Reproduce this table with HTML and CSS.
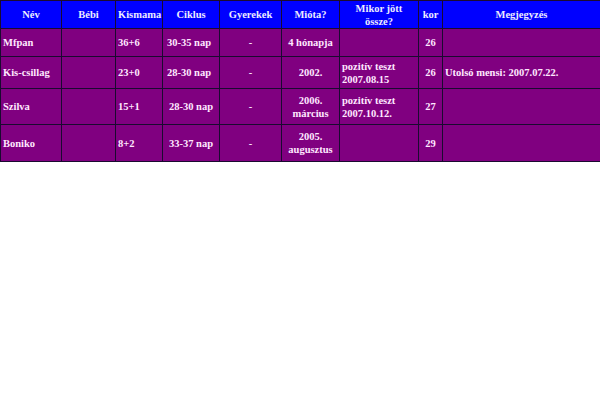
FILE: index.html
```html
<!DOCTYPE html>
<html>
<head>
<meta charset="utf-8">
<link rel="stylesheet" href="styles.css">
</head>
<body>
<table class="grid">
<colgroup>
<col class="c1"><col class="c2"><col class="c3"><col class="c4"><col class="c5"><col class="c6"><col class="c7"><col class="c8"><col class="c9">
</colgroup>
<thead>
<tr class="head">
<th>Név</th><th>Bébi</th><th>Kismama</th><th>Ciklus</th><th>Gyerekek</th><th>Mióta?</th><th>Mikor jött<br>össze?</th><th>kor</th><th>Megjegyzés</th>
</tr>
</thead>
<tbody>
<tr class="r1">
<td>Mfpan</td><td></td><td>36+6</td><td class="cyc">30-35 nap</td><td class="mid">-</td><td class="mid">4 hónapja</td><td></td><td class="mid">26</td><td></td>
</tr>
<tr class="r2">
<td>Kis-csillag</td><td></td><td>23+0</td><td class="cyc">28-30 nap</td><td class="mid">-</td><td class="mid">2002.</td><td>pozitív teszt<br>2007.08.15</td><td class="mid">26</td><td>Utolsó mensi: 2007.07.22.</td>
</tr>
<tr class="r3">
<td>Szilva</td><td></td><td>15+1</td><td class="mid">28-30 nap</td><td class="mid">-</td><td class="mid">2006.<br>március</td><td>pozitív teszt<br>2007.10.12.</td><td class="mid">27</td><td></td>
</tr>
<tr class="r4">
<td>Boniko</td><td></td><td>8+2</td><td class="mid">33-37 nap</td><td class="mid">-</td><td class="mid">2005.<br>augusztus</td><td></td><td class="mid">29</td><td></td>
</tr>
</tbody>
</table>
</body>
</html>
```

FILE: styles.css
```css
html, body {
  margin: 0;
  padding: 0;
  background: #ffffff;
}

.grid {
  width: 600px;
  table-layout: fixed;
  border-collapse: collapse;
  font-family: "Liberation Serif", "DejaVu Serif", serif;
  font-weight: bold;
  font-size: 10.5px;
  line-height: 13px;
}

.c1 { width: 61px; }
.c2 { width: 54px; }
.c3 { width: 47px; }
.c4 { width: 57px; }
.c5 { width: 62px; }
.c6 { width: 58px; }
.c7 { width: 79px; }
.c8 { width: 24px; }
.c9 { width: 158px; }

.grid th,
.grid td {
  border: 1px solid #1a0a30;
  padding: 0 2px;
  vertical-align: middle;
  overflow: hidden;
  white-space: nowrap;
}

.grid th {
  background: #0000ff;
  color: #ececff;
  text-align: center;
  font-weight: bold;
}

.grid td {
  background: #800080;
  color: #ffe8ff;
  text-align: left;
}

.grid td.mid {
  text-align: center;
}

.grid td.cyc {
  padding-left: 4px;
}

.head { height: 28px; }
.r1 { height: 28px; }
.r2 { height: 32px; }
.r3 { height: 36px; }
.r4 { height: 37px; }
```
